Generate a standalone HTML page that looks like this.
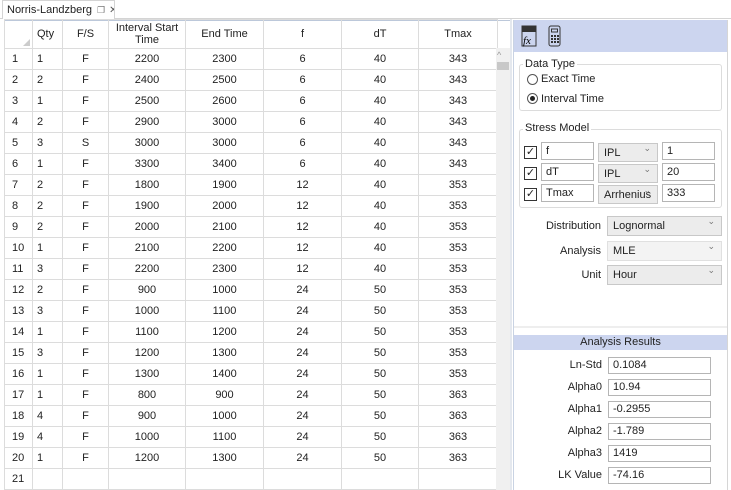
<!DOCTYPE html><html><head><style>
*{box-sizing:border-box;margin:0;padding:0}
body{width:731px;height:490px;overflow:hidden;background:#fff;font-family:"Liberation Sans",sans-serif;font-size:11px;color:#222;position:relative}
.a{position:absolute}
table{border-collapse:collapse;table-layout:fixed}
td{border:1px solid #dcdcdc;height:21px;text-align:center;padding:0;white-space:nowrap}
td.rh{text-align:left;padding-left:7px;background:#fff}
td.q{text-align:left;padding-left:4px}
tr.h td{height:29px;line-height:12px}
.inp{position:absolute;border:1px solid #b5b5b5;background:#fff;height:18px;padding:2px 4px;font-size:11px}
.sel{position:absolute;border:1px solid #c8c8c8;background:#ececec;height:19px;padding:3px 5px;font-size:11px}
.sel:after{content:"\2304";position:absolute;right:6px;top:-1px;font-size:9px;color:#777}
.cb{position:absolute;width:13px;height:13px;border:1px solid #333;background:#fff;font-size:11px;line-height:11px;text-align:center}
.lbl{position:absolute;text-align:right;font-size:11px}
</style></head><body>
<div class="a" style="left:0;top:0;width:731px;height:19px;border-bottom:1px solid #d4d4d4"></div>
<div class="a" style="left:2px;top:0;width:113px;height:19px;border:1px solid #d4d4d4;border-bottom:none;background:#fff;padding:3px 4px;font-size:11px;white-space:nowrap;overflow:hidden">Norris-Landzberg<span style="color:#777;font-size:9px;margin-left:5px">&#x2750;</span><span style="color:#555;margin-left:4px;font-size:10px">✕</span></div>
<div class="a" style="left:4px;top:20px;width:507px;height:470px;border-left:1px solid #bcc8da;border-top:1px solid #bcc8da"></div>
<table class="a" style="left:4px;top:19px;width:493px">
<colgroup><col style="width:28px"><col style="width:30px"><col style="width:46px"><col style="width:77px"><col style="width:78px"><col style="width:78px"><col style="width:77px"><col style="width:79px"></colgroup>
<tr class="h"><td style="position:relative"><span style="position:absolute;right:2px;bottom:2px;border-left:7px solid transparent;border-bottom:7px solid #ccc"></span></td><td class="q">Qty</td><td>F/S</td><td>Interval Start<br>Time</td><td>End Time</td><td>f</td><td>dT</td><td>Tmax</td></tr>
<tr><td class="rh">1</td><td class="q">1</td><td>F</td><td>2200</td><td>2300</td><td>6</td><td>40</td><td>343</td></tr>
<tr><td class="rh">2</td><td class="q">2</td><td>F</td><td>2400</td><td>2500</td><td>6</td><td>40</td><td>343</td></tr>
<tr><td class="rh">3</td><td class="q">1</td><td>F</td><td>2500</td><td>2600</td><td>6</td><td>40</td><td>343</td></tr>
<tr><td class="rh">4</td><td class="q">2</td><td>F</td><td>2900</td><td>3000</td><td>6</td><td>40</td><td>343</td></tr>
<tr><td class="rh">5</td><td class="q">3</td><td>S</td><td>3000</td><td>3000</td><td>6</td><td>40</td><td>343</td></tr>
<tr><td class="rh">6</td><td class="q">1</td><td>F</td><td>3300</td><td>3400</td><td>6</td><td>40</td><td>343</td></tr>
<tr><td class="rh">7</td><td class="q">2</td><td>F</td><td>1800</td><td>1900</td><td>12</td><td>40</td><td>353</td></tr>
<tr><td class="rh">8</td><td class="q">2</td><td>F</td><td>1900</td><td>2000</td><td>12</td><td>40</td><td>353</td></tr>
<tr><td class="rh">9</td><td class="q">2</td><td>F</td><td>2000</td><td>2100</td><td>12</td><td>40</td><td>353</td></tr>
<tr><td class="rh">10</td><td class="q">1</td><td>F</td><td>2100</td><td>2200</td><td>12</td><td>40</td><td>353</td></tr>
<tr><td class="rh">11</td><td class="q">3</td><td>F</td><td>2200</td><td>2300</td><td>12</td><td>40</td><td>353</td></tr>
<tr><td class="rh">12</td><td class="q">2</td><td>F</td><td>900</td><td>1000</td><td>24</td><td>50</td><td>353</td></tr>
<tr><td class="rh">13</td><td class="q">3</td><td>F</td><td>1000</td><td>1100</td><td>24</td><td>50</td><td>353</td></tr>
<tr><td class="rh">14</td><td class="q">1</td><td>F</td><td>1100</td><td>1200</td><td>24</td><td>50</td><td>353</td></tr>
<tr><td class="rh">15</td><td class="q">3</td><td>F</td><td>1200</td><td>1300</td><td>24</td><td>50</td><td>353</td></tr>
<tr><td class="rh">16</td><td class="q">1</td><td>F</td><td>1300</td><td>1400</td><td>24</td><td>50</td><td>353</td></tr>
<tr><td class="rh">17</td><td class="q">1</td><td>F</td><td>800</td><td>900</td><td>24</td><td>50</td><td>363</td></tr>
<tr><td class="rh">18</td><td class="q">4</td><td>F</td><td>900</td><td>1000</td><td>24</td><td>50</td><td>363</td></tr>
<tr><td class="rh">19</td><td class="q">4</td><td>F</td><td>1000</td><td>1100</td><td>24</td><td>50</td><td>363</td></tr>
<tr><td class="rh">20</td><td class="q">1</td><td>F</td><td>1200</td><td>1300</td><td>24</td><td>50</td><td>363</td></tr>
<tr><td class="rh">21</td><td class="q"></td><td></td><td></td><td></td><td></td><td></td><td></td></tr>
</table>
<div class="a" style="left:496px;top:48px;width:14px;height:442px;background:#f0f0f0"></div>
<div class="a" style="left:497px;top:50px;font-size:9px;color:#999">^</div>
<div class="a" style="left:497px;top:62px;width:12px;height:8px;background:#c8c8c8"></div>
<div class="a" style="left:510px;top:19px;width:2px;height:471px;background:#e4e8ee"></div>
<div class="a" style="left:513px;top:20px;width:215px;height:470px;border-left:1px solid #c9d3e3;border-right:1px solid #d6d6d6"></div>
<div class="a" style="left:514px;top:20px;width:213px;height:32px;background:#ccd5ef"></div>
<svg class="a" style="left:521px;top:25px" width="50" height="24"><rect x="1" y="1" width="14" height="6" fill="#333"/><g fill="none" stroke="#333"><rect x="1" y="1" width="14" height="20"/><rect x="28" y="1" width="11" height="20" rx="2"/><rect x="30.5" y="4" width="6" height="3"/></g><text x="2" y="19" font-size="11" font-style="italic" font-family="Liberation Serif">fx</text><g fill="#333"><rect x="30" y="10" width="2" height="2"/><rect x="33" y="10" width="2" height="2"/><rect x="36" y="10" width="2" height="2"/><rect x="30" y="13" width="2" height="2"/><rect x="33" y="13" width="2" height="2"/><rect x="36" y="13" width="2" height="2"/><rect x="30" y="16" width="2" height="2"/><rect x="33" y="16" width="2" height="2"/><rect x="36" y="16" width="2" height="2"/></g></svg>
<div class="a" style="left:519px;top:64px;width:203px;height:47px;border:1px solid #dcdcdc;border-radius:3px"></div>
<div class="a" style="left:523px;top:58px;background:#fff;padding:0 2px">Data Type</div>
<div class="a" style="left:527px;top:74px;width:11px;height:11px;border:1px solid #555;border-radius:50%"></div>
<div class="a" style="left:541px;top:73px">Exact Time</div>
<div class="a" style="left:527px;top:93px;width:11px;height:11px;border:1px solid #555;border-radius:50%"><div style="margin:2px;width:5px;height:5px;border-radius:50%;background:#222"></div></div>
<div class="a" style="left:541px;top:93px">Interval Time</div>
<div class="a" style="left:519px;top:129px;width:203px;height:79px;border:1px solid #dcdcdc;border-radius:3px"></div>
<div class="a" style="left:523px;top:122px;background:#fff;padding:0 2px">Stress Model</div>
<div class="cb" style="left:524px;top:146px">✓</div><div class="inp" style="left:541px;top:142px;width:53px">f</div><div class="sel" style="left:598px;top:143px;width:60px">IPL</div><div class="inp" style="left:662px;top:142px;width:53px">1</div>
<div class="cb" style="left:524px;top:167px">✓</div><div class="inp" style="left:541px;top:163px;width:53px">dT</div><div class="sel" style="left:598px;top:164px;width:60px">IPL</div><div class="inp" style="left:662px;top:163px;width:53px">20</div>
<div class="cb" style="left:524px;top:188px">✓</div><div class="inp" style="left:541px;top:184px;width:53px">Tmax</div><div class="sel" style="left:598px;top:185px;width:60px">Arrhenius</div><div class="inp" style="left:662px;top:184px;width:53px">333</div>
<div class="lbl" style="left:520px;width:81px;top:220px">Distribution</div><div class="sel" style="left:607px;top:216px;width:115px;height:20px">Lognormal</div>
<div class="lbl" style="left:520px;width:81px;top:245px">Analysis</div><div class="sel" style="left:607px;top:241px;width:115px;height:20px;background:#f3f3f3;border-color:#e0e0e0">MLE</div>
<div class="lbl" style="left:520px;width:81px;top:269px">Unit</div><div class="sel" style="left:607px;top:265px;width:115px;height:20px">Hour</div>
<div class="a" style="left:514px;top:326px;width:213px;height:2px;background:#eee"></div>
<div class="a" style="left:514px;top:335px;width:213px;height:15px;background:#ccd5ef;text-align:center;line-height:15px">Analysis Results</div>
<div class="lbl" style="left:540px;width:62px;top:359px">Ln-Std</div><div class="inp" style="left:608px;top:357px;width:103px;height:17px;padding-top:1px">0.1084</div>
<div class="lbl" style="left:540px;width:62px;top:381px">Alpha0</div><div class="inp" style="left:608px;top:379px;width:103px;height:17px;padding-top:1px">10.94</div>
<div class="lbl" style="left:540px;width:62px;top:403px">Alpha1</div><div class="inp" style="left:608px;top:401px;width:103px;height:17px;padding-top:1px">-0.2955</div>
<div class="lbl" style="left:540px;width:62px;top:425px">Alpha2</div><div class="inp" style="left:608px;top:423px;width:103px;height:17px;padding-top:1px">-1.789</div>
<div class="lbl" style="left:540px;width:62px;top:447px">Alpha3</div><div class="inp" style="left:608px;top:445px;width:103px;height:17px;padding-top:1px">1419</div>
<div class="lbl" style="left:540px;width:62px;top:469px">LK Value</div><div class="inp" style="left:608px;top:467px;width:103px;height:17px;padding-top:1px">-74.16</div>
</body></html>
